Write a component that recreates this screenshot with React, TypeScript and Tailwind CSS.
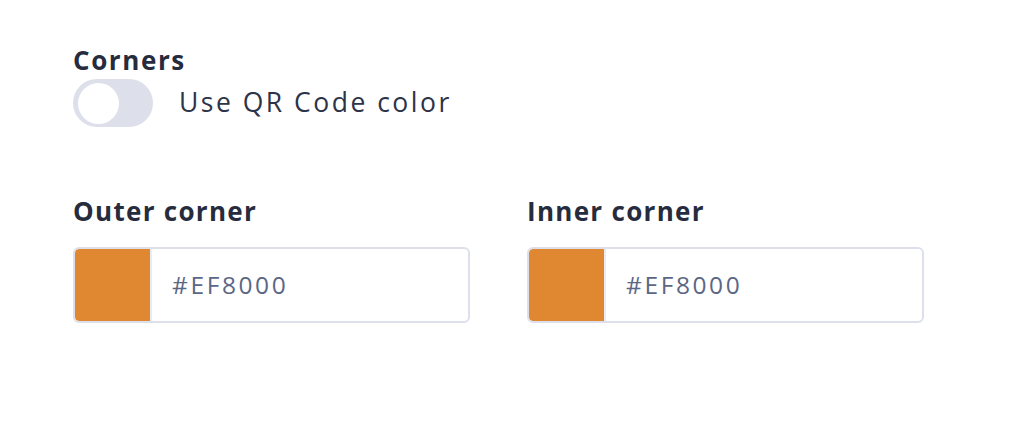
import React from "react";

function ColorField({ label, value }: { label: string; value: string }) {
  return (
    <div className="flex flex-col w-[397px]">
      <div className="text-[26px] leading-[32px] font-bold tracking-[1.3px] text-[#262c3d]">{label}</div>
      <div className="mt-[20px] flex h-[76px] rounded-[6px] border-2 border-[#dde0ea] bg-white overflow-hidden">
        <div className="w-[77px] h-full bg-[#e08731] rounded-l-[4px] border-r-2 border-[#e9ebf2]" />
        <div className="flex items-center pl-[20px] text-[24.5px] tracking-[2.6px] text-[#5b6785]">{value}</div>
      </div>
    </div>
  );
}

export default function App() {
  return (
    <div
      className="w-[1018px] h-[436px] bg-white pl-[73px] pt-[44px]"
      style={{ fontFamily: "'Open Sans', sans-serif" }}
    >
      <div className="text-[26px] leading-[32px] font-bold tracking-[1.6px] text-[#262c3d]">Corners</div>
      <div className="flex items-center mt-[3px] gap-[26px]">
        <div className="w-[80px] h-[48px] rounded-full bg-[#dde0ea] flex items-center pl-[5px]">
          <div className="w-[41px] h-[41px] rounded-full bg-white" />
        </div>
        <div className="text-[26.5px] tracking-[2.5px] text-[#2d3348]">Use QR Code color</div>
      </div>
      <div className="flex gap-[57px] mt-[68px]">
        <ColorField label="Outer corner" value="#EF8000" />
        <ColorField label="Inner corner" value="#EF8000" />
      </div>
    </div>
  );
}
